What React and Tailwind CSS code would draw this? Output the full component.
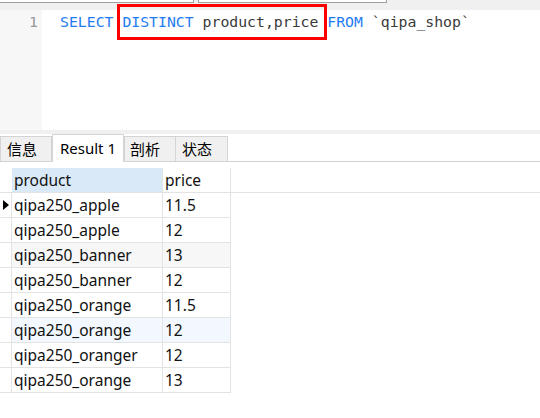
import React from 'react';

const rows = [
  { product: 'qipa250_apple', price: '11.5', current: true },
  { product: 'qipa250_apple', price: '12' },
  { product: 'qipa250_banner', price: '13', bg: 'bg-[#f7f7f7]' },
  { product: 'qipa250_banner', price: '12' },
  { product: 'qipa250_orange', price: '11.5' },
  { product: 'qipa250_orange', price: '12', bg: 'bg-[#f2f8fd]' },
  { product: 'qipa250_oranger', price: '12' },
  { product: 'qipa250_orange', price: '13' },
];

const uiFont = { fontFamily: '"Noto Sans", "Noto Sans CJK SC", sans-serif' };

export default function App() {
  return (
    <div className="relative w-[540px] h-[418px] overflow-hidden bg-white" style={uiFont}>
      {/* toolbar remains */}
      <div className="flex h-[10px] bg-[#f0f0f0]">
        <div className="h-[3px] w-[194px] border-b border-r border-[#a0a0a0] bg-white" />
        <div className="ml-[4px] h-[3px] w-[189px] border-b border-x border-[#a0a0a0] bg-white" />
      </div>

      {/* editor */}
      <div className="flex h-[120px]">
        <div className="w-[42px] bg-[#f7f7f7] pr-[4px] pt-[2px] text-right font-['DejaVu_Sans_Mono',monospace] text-[14.8px] leading-[20px] text-[#999]">
          1
        </div>
        <div className="flex-1 pl-[18px] pt-[2px] font-['DejaVu_Sans_Mono',monospace] text-[14.8px] leading-[20px] whitespace-pre text-[#3a3a3a]">
          <span className="text-[#1f7cf2]">SELECT</span>{' '}
          <span className="text-[#1f7cf2]">DISTINCT</span> product,price{' '}
          <span className="text-[#1f7cf2]">FROM</span> `qipa_shop`
        </div>
      </div>

      {/* annotation box */}
      <div className="absolute left-[117px] top-[4px] h-[36px] w-[210px] border-[3px] border-[#ff0000]" />

      <div className="h-[4px] bg-[#f0f0f0]" />

      {/* tabs */}
      <div className="flex h-[28px] items-end border-b border-[#d0d0d0] text-[15px] text-black">
        <div className="-mb-px flex h-[26px] w-[52px] items-center border border-[#d4d4d4] bg-[#f0f0f0] pl-[6px]">信息</div>
        <div className="-mb-px flex h-[28px] items-center border-x border-t border-[#d4d4d4] bg-white px-[7px]">Result 1</div>
        <div className="-mb-px flex h-[26px] w-[52px] items-center border border-[#d4d4d4] bg-[#f0f0f0] pl-[5px]">剖析</div>
        <div className="-mb-px flex h-[26px] w-[52px] items-center border-y border-r border-[#d4d4d4] bg-[#f0f0f0] pl-[6px]">状态</div>
      </div>

      {/* result grid */}
      <div className="mt-[6px] text-[15.5px] text-[#111]">
        <div className="flex h-[25px] border-b border-[#e3e3e3]">
          <div className="w-[12px]" />
          <div className="flex w-[151px] items-center border-r border-[#e3e3e3] bg-[#d9e9f7] pl-[2px] pt-px">product</div>
          <div className="flex w-[68px] items-center border-r border-[#e3e3e3] pl-[2px] pt-px">price</div>
        </div>
        {rows.map((r, i) => (
          <div key={i} className="flex h-[25px] w-[231px] border-b border-[#e3e3e3]">
            <div className="flex w-[12px] items-center border-r border-[#e3e3e3] pl-[3px]">
              {r.current && (
                <svg width="6" height="10" viewBox="0 0 6 10">
                  <path d="M0 0L6 5L0 10Z" fill="#000" />
                </svg>
              )}
            </div>
            <div className={`flex w-[151px] items-center border-r border-[#e3e3e3] pl-[2px] pt-[2px] ${r.bg || ''}`}>{r.product}</div>
            <div className={`flex w-[68px] items-center border-r border-[#e3e3e3] pl-[2px] pt-[2px] ${r.bg || ''}`}>{r.price}</div>
          </div>
        ))}
      </div>
    </div>
  );
}
